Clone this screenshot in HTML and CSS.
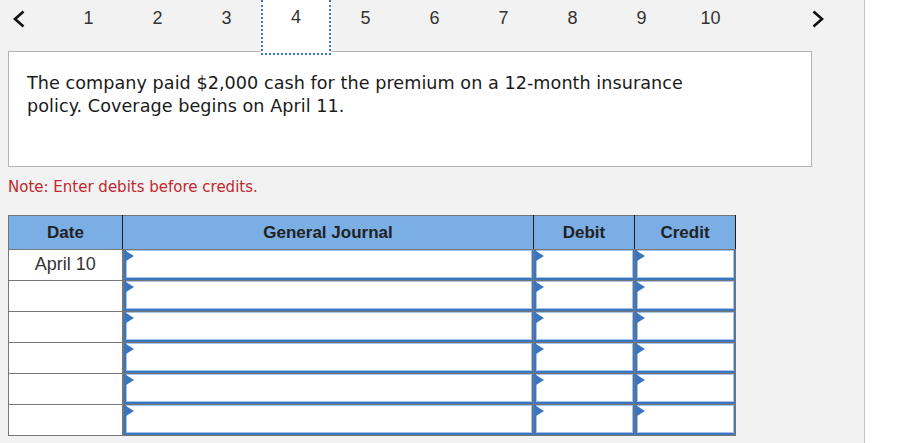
FILE: index.html
```html
<!DOCTYPE html>
<html>
<head>
<meta charset="utf-8">
<link rel="stylesheet" href="styles.css">
</head>
<body>
<div class="page">
  <nav class="pager">
    <span class="arrow prev"><svg width="14" height="18" viewBox="0 0 14 18"><polyline points="11.5,1.5 3,9 11.5,16.5" fill="none" stroke="#111" stroke-width="2.6"/></svg></span>
    <span class="num">1</span>
    <span class="num">2</span>
    <span class="num">3</span>
    <span class="num active">4</span>
    <span class="num">5</span>
    <span class="num">6</span>
    <span class="num">7</span>
    <span class="num">8</span>
    <span class="num">9</span>
    <span class="num">10</span>
    <span class="arrow next"><svg width="14" height="18" viewBox="0 0 14 18"><polyline points="2.5,1.5 11,9 2.5,16.5" fill="none" stroke="#111" stroke-width="2.6"/></svg></span>
  </nav>
  <div class="question">The company paid $2,000 cash for the premium on a 12-month insurance policy. Coverage begins on April 11.</div>
  <p class="note">Note: Enter debits before credits.</p>
  <table class="journal">
    <colgroup><col class="c-date"><col class="c-gj"><col class="c-dr"><col class="c-cr"></colgroup>
    <thead>
      <tr><th>Date</th><th>General Journal</th><th>Debit</th><th>Credit</th></tr>
    </thead>
    <tbody>
      <tr><td class="date">April 10</td><td class="in"><div class="field"></div></td><td class="in"><div class="field"></div></td><td class="in"><div class="field"></div></td></tr>
      <tr><td class="date"></td><td class="in"><div class="field"></div></td><td class="in"><div class="field"></div></td><td class="in"><div class="field"></div></td></tr>
      <tr><td class="date"></td><td class="in"><div class="field"></div></td><td class="in"><div class="field"></div></td><td class="in"><div class="field"></div></td></tr>
      <tr><td class="date"></td><td class="in"><div class="field"></div></td><td class="in"><div class="field"></div></td><td class="in"><div class="field"></div></td></tr>
      <tr><td class="date"></td><td class="in"><div class="field"></div></td><td class="in"><div class="field"></div></td><td class="in"><div class="field"></div></td></tr>
      <tr><td class="date"></td><td class="in"><div class="field"></div></td><td class="in"><div class="field"></div></td><td class="in"><div class="field"></div></td></tr>
    </tbody>
  </table>
</div>
</body>
</html>
```

FILE: styles.css
```css
html, body {
  margin: 0;
  padding: 0;
  background: #ffffff;
}
.page {
  width: 865px;
  min-height: 443px;
  background: #f2f2f2;
  border-right: 1px solid #c4c4c4;
  box-sizing: border-box;
  padding: 0 0 0 8px;
  font-family: "Liberation Sans", Arial, sans-serif;
}
.pager {
  display: flex;
  align-items: flex-start;
  height: 51px;
}
.arrow {
  display: flex;
  align-items: center;
  height: 37px;
}
.prev {
  width: 42px;
  padding-left: 4px;
}
.next {
  margin-left: 66px;
}
.num {
  width: 69px;
  height: 37px;
  display: flex;
  align-items: center;
  justify-content: center;
  font-size: 18px;
  color: #333;
}
.num.active {
  width: 70px;
  height: 55px;
  box-sizing: border-box;
  padding-bottom: 18px;
  background: #fff;
  border: 2px dotted #3f78c2;
  border-top: 0;
  position: relative;
  z-index: 1;
}
.question {
  width: 804px;
  height: 116px;
  box-sizing: border-box;
  background: #fff;
  border: 1px solid #b4b4b4;
  padding: 20px 90px 0 18px;
  font-family: "DejaVu Sans", Verdana, sans-serif;
  font-size: 17.6px;
  letter-spacing: 0.05px;
  line-height: 23px;
  color: #1a1a1a;
}
.note {
  margin: 10px 0 0 0;
  height: 38px;
  font-family: "DejaVu Sans", Verdana, sans-serif;
  font-size: 15px;
  line-height: 20px;
  color: #c0282e;
}
.journal {
  border-collapse: collapse;
  table-layout: fixed;
  width: 728px;
  border: 1px solid #777;
}
.c-date { width: 114px; }
.c-gj { width: 411px; }
.c-dr { width: 101px; }
.c-cr { width: 101px; }
.journal th {
  height: 33px;
  padding: 0;
  background: #7aaee4;
  font-size: 17px;
  font-weight: bold;
  color: #222;
  border-left: 1px solid #1e1e1e;
  border-right: 1px solid #1e1e1e;
  border-bottom: 1px solid #777;
}
.journal th:first-child {
  border-left: 1px solid #777;
}
.journal td {
  height: 30px;
  padding: 0;
  border: 1px solid #777;
  background: #fff;
}
.journal td.date {
  text-align: center;
  font-size: 18px;
  color: #333;
  vertical-align: top;
  padding-top: 4px;
  height: 26px;
  border-right-width: 2px;
}
.journal td.in {
  vertical-align: top;
}
.field {
  position: relative;
  height: 30px;
  box-sizing: border-box;
  border-left: 2px solid #3a75c0;
  border-bottom: 2px solid #3a75c0;
  border-right: 1px solid #3a75c0;
  box-shadow: inset 1px 1px 0 #a7c3e9, inset -1px -1px 0 #a7c3e9;
  background: #fff;
}
.field::before {
  content: "";
  position: absolute;
  left: 0;
  top: 1px;
  border-left: 8px solid #3a75c0;
  border-top: 5px solid transparent;
  border-bottom: 5px solid transparent;
}
```
